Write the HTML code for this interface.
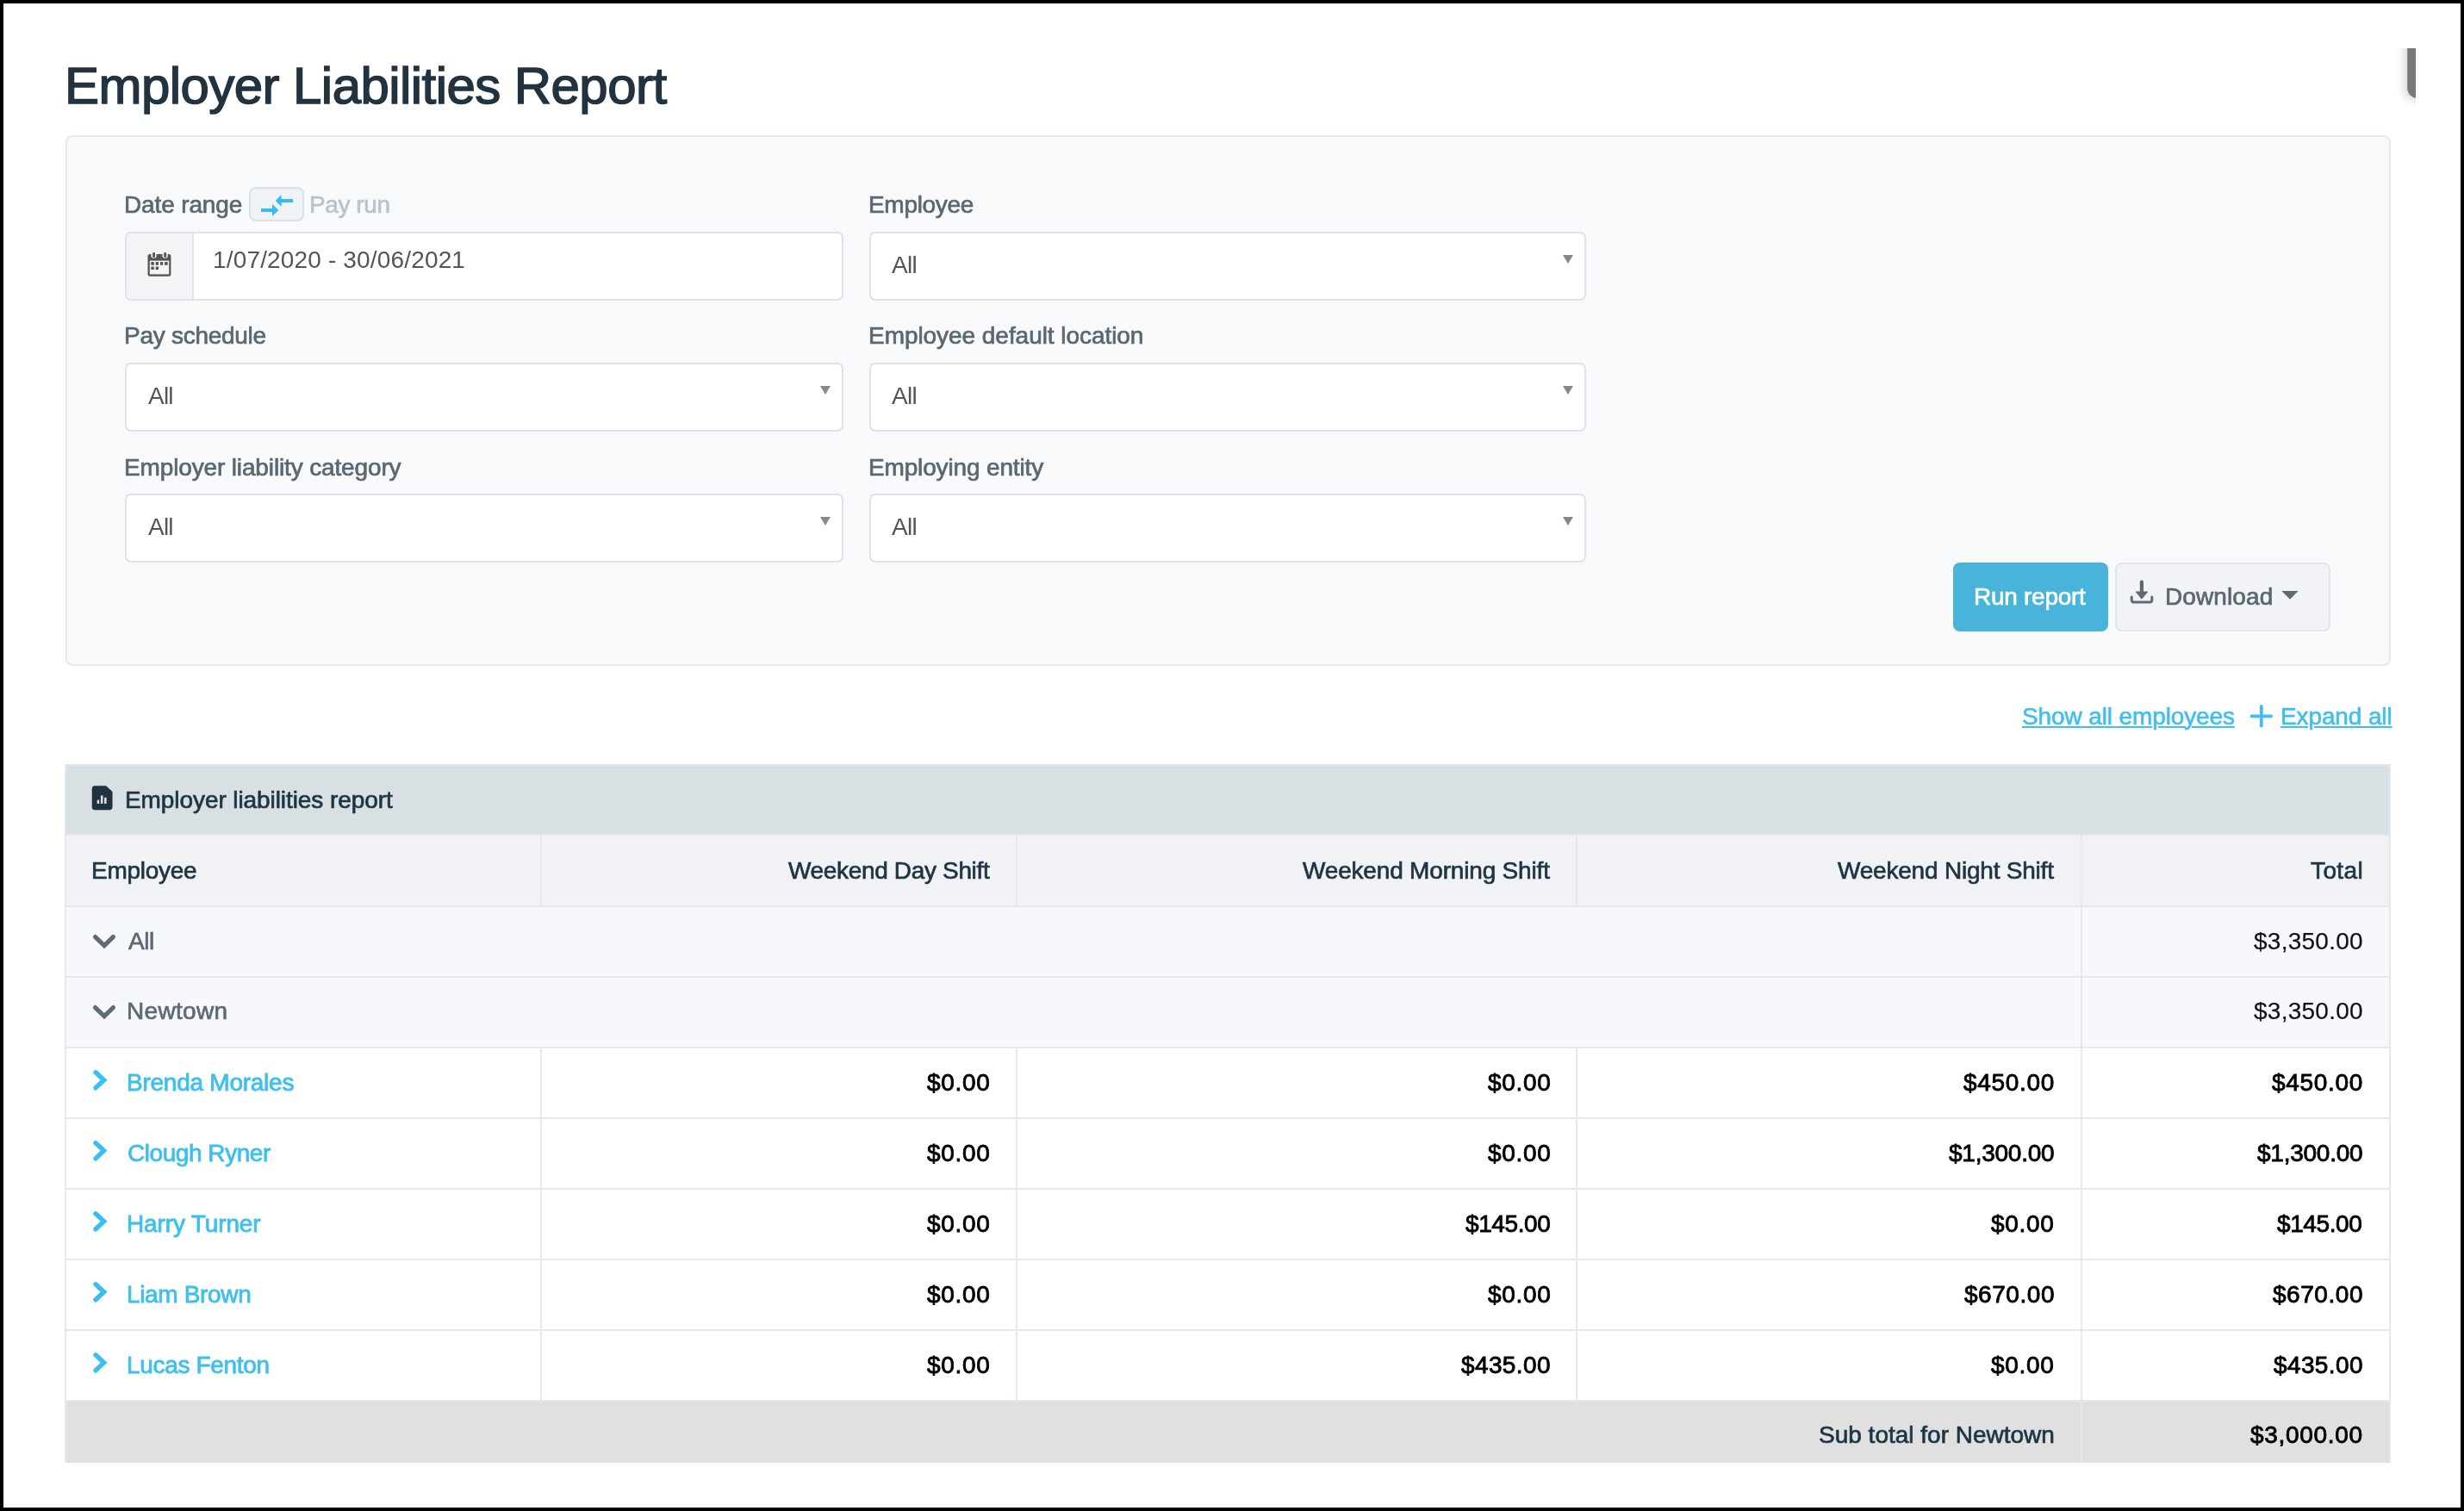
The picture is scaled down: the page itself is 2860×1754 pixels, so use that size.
<!DOCTYPE html>
<html><head><meta charset="utf-8"><title>Employer Liabilities Report</title>
<style>
html,body{margin:0;padding:0;}
body{width:2860px;height:1754px;overflow:hidden;background:#000;position:relative;font-family:"Liberation Sans",sans-serif;}
.page{position:absolute;left:4px;top:4px;width:2852px;height:1746px;background:#fff;overflow:hidden;}
.a{position:absolute;box-sizing:border-box;}
.t{position:absolute;white-space:nowrap;line-height:1;will-change:transform;font-family:"Liberation Sans",sans-serif;font-weight:400;}
.inp{position:absolute;box-sizing:border-box;background:#fff;border:2px solid #dde3e8;border-radius:7px;}
.sel .arr{position:absolute;width:0;height:0;border-left:6px solid transparent;border-right:6px solid transparent;border-top:10px solid #888;}
.hl{position:absolute;height:2px;background:#e4e9f0;}
.vl{position:absolute;width:2px;background:#e4e9f0;}
</style></head>
<body>
<div class="page"></div>
<div id="root" style="position:absolute;left:0;top:0;width:2860px;height:1754px;">
<!-- panel -->
<div class="a" style="left:4px;top:4px;width:2852px;height:1746px;background:#fff;"></div>
<div class="a" style="left:76px;top:157px;width:2699px;height:616px;background:#f8f9fb;border:2px solid #e5e9ef;border-radius:8px;"></div>
<!-- toggle -->
<div class="a" style="left:289px;top:217px;width:64px;height:40px;background:#f1f2f6;border:2px solid #d9e1ec;border-radius:8px;"></div>
<svg class="a" style="left:289px;top:217px" width="64" height="40" viewBox="289 217 64 40">
 <rect x="303" y="242" width="14" height="4" fill="#33bfee"/>
 <polygon points="316,236.8 323.3,243.9 316,251" fill="#33bfee"/>
 <rect x="326" y="231" width="14.2" height="4" fill="#33bfee"/>
 <polygon points="326.6,225.9 319.8,232.9 326.6,239.9" fill="#33bfee"/>
</svg>
<!-- date input -->
<div class="inp" style="left:145px;top:269px;width:834px;height:80px;overflow:hidden;">
  <div class="a" style="left:0;top:0;width:78px;height:76px;background:#f3f4f6;border-right:2px solid #dde3e8;"></div>
</div>
<svg class="a" style="left:165px;top:287px" width="40" height="40" viewBox="165 287 40 40">
 <rect x="171.5" y="295" width="26.9" height="25.7" rx="2.6" fill="#555"/>
 <rect x="173.8" y="302.6" width="22.4" height="15.8" fill="#f3f4f6"/>
 <circle cx="178.5" cy="296.6" r="3.2" fill="#f3f4f6"/>
 <circle cx="191.6" cy="296.6" r="3.2" fill="#f3f4f6"/>
 <rect x="177.1" y="292.9" width="2.9" height="6.2" rx="1.45" fill="#555"/>
 <rect x="190.2" y="292.9" width="2.9" height="6.2" rx="1.45" fill="#555"/>
 <g fill="#555">
  <rect x="175.3" y="304.1" width="3.5" height="3.7" rx="0.6"/>
  <rect x="180.7" y="304.1" width="3.3" height="3.7" rx="0.6"/>
  <rect x="185.9" y="304.1" width="3.4" height="3.7" rx="0.6"/>
  <rect x="191.1" y="304.1" width="3.6" height="3.7" rx="0.6"/>
  <rect x="175.3" y="309.4" width="3.5" height="3.7" rx="0.6"/>
  <rect x="180.7" y="309.4" width="3.3" height="3.7" rx="0.6"/>
 </g>
</svg>
<!-- selects -->
<div class="inp sel" style="left:1009px;top:269px;width:832px;height:80px;"><div class="arr" style="left:803px;top:25px"></div></div>
<div class="inp sel" style="left:145px;top:421px;width:834px;height:80px;"><div class="arr" style="left:805px;top:25px"></div></div>
<div class="inp sel" style="left:1009px;top:421px;width:832px;height:80px;"><div class="arr" style="left:803px;top:25px"></div></div>
<div class="inp sel" style="left:145px;top:573px;width:834px;height:80px;"><div class="arr" style="left:805px;top:25px"></div></div>
<div class="inp sel" style="left:1009px;top:573px;width:832px;height:80px;"><div class="arr" style="left:803px;top:25px"></div></div>
<!-- buttons -->
<div class="a" style="left:2267px;top:653px;width:180px;height:80px;background:#48b4d9;border-radius:8px;"></div>
<div class="a" style="left:2455px;top:653px;width:250px;height:80px;background:#f2f3f6;border:2px solid #e2e7ee;border-radius:8px;"></div>
<svg class="a" style="left:2465px;top:665px" width="210" height="45" viewBox="2465 665 210 45">
 <rect x="2483.8" y="673.5" width="4.2" height="15" rx="2" fill="#5e6a73"/>
 <polygon points="2479.3,687 2492.7,687 2485.9,695.2" fill="#5e6a73" stroke="#5e6a73" stroke-width="1" stroke-linejoin="round"/>
 <path d="M2474.2,693 v3.5 a2.6,2.6 0 0 0 2.6,2.6 h18.4 a2.6,2.6 0 0 0 2.6,-2.6 v-3.5" fill="none" stroke="#5e6a73" stroke-width="3" stroke-linecap="round"/>
 <polygon points="2648.3,685.9 2667.6,685.9 2658,695.8" fill="#5e6a73"/>
</svg>
<!-- links -->
<svg class="a" style="left:2608px;top:814px" width="34" height="34" viewBox="2608 814 34 34">
 <path d="M2624.8,820 v22.6 M2613.5,831.3 h22.6" stroke="#3dbfef" stroke-width="3.8" stroke-linecap="round"/>
</svg>
<!-- table -->
<div class="a" style="left:75px;top:887px;width:2700px;height:82px;background:#d9e0e4;"></div>
<div class="a" style="left:75px;top:969px;width:2700px;height:83px;background:#f0f2f6;"></div>
<div class="a" style="left:75px;top:1052px;width:2700px;height:164px;background:#f7f8fb;"></div>
<div class="a" style="left:75px;top:1216px;width:2700px;height:410px;background:#fff;"></div>
<div class="a" style="left:75px;top:1626px;width:2700px;height:72px;background:#e0e0e0;"></div>
<div class="vl" style="left:75px;top:887px;height:811px;"></div>
<div class="vl" style="left:2773px;top:887px;height:811px;"></div>
<div class="hl" style="left:75px;top:887px;width:2700px;background:#e1e7ec;"></div>
<div class="hl" style="left:75px;top:968px;width:2700px;background:#e3e8ee;"></div>
<div class="hl" style="left:75px;top:1051px;width:2700px;"></div>
<div class="hl" style="left:75px;top:1133px;width:2700px;"></div>
<div class="hl" style="left:75px;top:1215px;width:2700px;"></div>
<div class="hl" style="left:75px;top:1297px;width:2700px;"></div>
<div class="hl" style="left:75px;top:1379px;width:2700px;"></div>
<div class="hl" style="left:75px;top:1461px;width:2700px;"></div>
<div class="hl" style="left:75px;top:1543px;width:2700px;"></div>
<div class="hl" style="left:75px;top:1625px;width:2700px;"></div>
<div class="vl" style="left:627px;top:969px;height:83px;"></div>
<div class="vl" style="left:1179px;top:969px;height:83px;"></div>
<div class="vl" style="left:1829px;top:969px;height:83px;"></div>
<div class="vl" style="left:627px;top:1216px;height:410px;"></div>
<div class="vl" style="left:1179px;top:1216px;height:410px;"></div>
<div class="vl" style="left:1829px;top:1216px;height:410px;"></div>
<div class="vl" style="left:2415px;top:969px;height:729px;"></div>
<!-- doc icon -->
<svg class="a" style="left:100px;top:905px" width="40" height="40" viewBox="100 905 40 40">
 <path d="M110,912.4 h13 l7.2,6.6 v18 a3,3 0 0 1 -3,3 h-17.2 a3,3 0 0 1 -3,-3 v-21.6 a3,3 0 0 1 3,-3 z" fill="#1f3240" stroke="#1f3240" stroke-width="0.6" stroke-linejoin="round"/>
 <rect x="112.7" y="928.6" width="2.5" height="4.3" fill="#d9e0e4"/>
 <rect x="116.9" y="923.4" width="2.6" height="9.5" fill="#d9e0e4"/>
 <rect x="121" y="925.8" width="2.6" height="7.1" fill="#d9e0e4"/>
</svg>
<!-- chevrons -->
<svg class="a" style="left:100px;top:1070px" width="40" height="120" viewBox="100 1070 40 120">
 <path d="M110.6,1087.6 L121,1097.6 L131.4,1087.6" fill="none" stroke="#5f6b75" stroke-width="5.2" stroke-linecap="round" stroke-linejoin="miter"/>
 <path d="M110.6,1169.6 L121,1179.6 L131.4,1169.6" fill="none" stroke="#5f6b75" stroke-width="5.2" stroke-linecap="round" stroke-linejoin="miter"/>
</svg>
<svg class="a" style="left:100px;top:1230px" width="40" height="380" viewBox="100 1230 40 380">
 <g fill="none" stroke="#37c0ee" stroke-width="5.4" stroke-linecap="round" stroke-linejoin="miter">
 <path d="M111,1244.8 L120.6,1253.8 L111,1262.8"/>
 <path d="M111,1326.8 L120.6,1335.8 L111,1344.8"/>
 <path d="M111,1408.8 L120.6,1417.8 L111,1426.8"/>
 <path d="M111,1490.8 L120.6,1499.8 L111,1508.8"/>
 <path d="M111,1572.8 L120.6,1581.8 L111,1590.8"/>
 </g>
</svg>
<!-- top-right element -->
<div class="a" style="left:2770px;top:56px;width:34px;height:84px;overflow:hidden;">
  <div class="a" style="left:24px;top:-10px;width:30px;height:68px;background:#787878;border-left:1.5px solid #8c8c8c;border-bottom-left-radius:12px;box-shadow:-5px 3px 10px rgba(0,0,0,0.13);"></div>
</div>
<div class=t style="left:74.5px;top:69.5px;font-size:60px;letter-spacing:-0.56px;color:#22333f;-webkit-text-stroke:1.5px #22333f;">Employer Liabilities Report</div>
<div class=t style="left:144.3px;top:224.2px;font-size:28px;letter-spacing:-0.14px;color:#5b6770;-webkit-text-stroke:0.7px #5b6770;">Date range</div>
<div class=t style="left:358.8px;top:224.2px;font-size:28px;letter-spacing:-0.42px;color:#b8c3cd;-webkit-text-stroke:0.7px #b8c3cd;">Pay run</div>
<div class=t style="left:1008.0px;top:224.2px;font-size:28px;letter-spacing:-0.31px;color:#5b6770;-webkit-text-stroke:0.7px #5b6770;">Employee</div>
<div class=t style="left:144.3px;top:376.0px;font-size:28px;letter-spacing:-0.27px;color:#5b6770;-webkit-text-stroke:0.7px #5b6770;">Pay schedule</div>
<div class=t style="left:1007.7px;top:376.0px;font-size:28px;letter-spacing:-0.05px;color:#5b6770;-webkit-text-stroke:0.7px #5b6770;">Employee default location</div>
<div class=t style="left:144.3px;top:528.5px;font-size:28px;letter-spacing:-0.14px;color:#5b6770;-webkit-text-stroke:0.7px #5b6770;">Employer liability category</div>
<div class=t style="left:1007.7px;top:528.5px;font-size:28px;letter-spacing:-0.15px;color:#5b6770;-webkit-text-stroke:0.7px #5b6770;">Employing entity</div>
<div class=t style="left:247.3px;top:287.8px;font-size:28px;letter-spacing:0.16px;color:#555555;">1/07/2020 - 30/06/2021</div>
<div class=t style="left:1035.0px;top:293.8px;font-size:28px;letter-spacing:-0.70px;color:#555555;">All</div>
<div class=t style="left:171.9px;top:445.7px;font-size:28px;letter-spacing:-0.80px;color:#555555;">All</div>
<div class=t style="left:1035.0px;top:445.7px;font-size:28px;letter-spacing:-0.70px;color:#555555;">All</div>
<div class=t style="left:171.9px;top:597.8px;font-size:28px;letter-spacing:-0.80px;color:#555555;">All</div>
<div class=t style="left:1035.0px;top:597.8px;font-size:28px;letter-spacing:-0.70px;color:#555555;">All</div>
<div class=t style="left:2291.0px;top:678.8px;font-size:28px;letter-spacing:-0.27px;color:#ffffff;-webkit-text-stroke:0.7px #ffffff;">Run report</div>
<div class=t style="left:2512.7px;top:678.8px;font-size:28px;letter-spacing:0.11px;color:#5b6770;-webkit-text-stroke:0.7px #5b6770;">Download</div>
<div class=t style="left:2347.3px;top:818.0px;font-size:28px;letter-spacing:-0.12px;color:#3dbfef;-webkit-text-stroke:0.6px #3dbfef;text-decoration:underline;text-decoration-thickness:2px;text-underline-offset:2px;text-decoration-skip-ink:auto;">Show all employees</div>
<div class=t style="left:2646.8px;top:818.0px;font-size:28px;letter-spacing:-0.12px;color:#3dbfef;-webkit-text-stroke:0.6px #3dbfef;text-decoration:underline;text-decoration-thickness:2px;text-underline-offset:2px;text-decoration-skip-ink:auto;">Expand all</div>
<div class=t style="left:145.0px;top:914.9px;font-size:28px;letter-spacing:-0.08px;color:#1f3442;-webkit-text-stroke:0.7px #1f3442;">Employer liabilities report</div>
<div class=t style="left:106.2px;top:996.6px;font-size:28px;letter-spacing:-0.26px;color:#1f3442;-webkit-text-stroke:0.7px #1f3442;">Employee</div>
<div class=t style="left:914.5px;top:996.6px;font-size:28px;letter-spacing:-0.34px;color:#1f3442;-webkit-text-stroke:0.7px #1f3442;">Weekend Day Shift</div>
<div class=t style="left:1512.2px;top:996.6px;font-size:28px;letter-spacing:-0.18px;color:#1f3442;-webkit-text-stroke:0.7px #1f3442;">Weekend Morning Shift</div>
<div class=t style="left:2132.7px;top:996.6px;font-size:28px;letter-spacing:-0.21px;color:#1f3442;-webkit-text-stroke:0.7px #1f3442;">Weekend Night Shift</div>
<div class=t style="left:2682.4px;top:996.6px;font-size:28px;letter-spacing:0.40px;color:#1f3442;-webkit-text-stroke:0.7px #1f3442;">Total</div>
<div class=t style="left:148.8px;top:1078.6px;font-size:28px;letter-spacing:-0.45px;color:#5e6a73;-webkit-text-stroke:0.7px #5e6a73;">All</div>
<div class=t style="left:2615.6px;top:1078.6px;font-size:28px;letter-spacing:0.25px;color:#111111;-webkit-text-stroke:0.2px #111111;">$3,350.00</div>
<div class=t style="left:147.3px;top:1160.2px;font-size:28px;letter-spacing:0.33px;color:#5e6a73;-webkit-text-stroke:0.7px #5e6a73;">Newtown</div>
<div class=t style="left:2615.6px;top:1160.2px;font-size:28px;letter-spacing:0.25px;color:#111111;-webkit-text-stroke:0.2px #111111;">$3,350.00</div>
<div class=t style="left:147.3px;top:1242.6px;font-size:28px;letter-spacing:-0.25px;color:#3dbfef;-webkit-text-stroke:0.8px #3dbfef;">Brenda Morales</div>
<div class=t style="left:1075.8px;top:1242.6px;font-size:28px;letter-spacing:0.70px;color:#000000;-webkit-text-stroke:0.85px #000000;">$0.00</div>
<div class=t style="left:1726.5px;top:1242.6px;font-size:28px;letter-spacing:0.70px;color:#000000;-webkit-text-stroke:0.85px #000000;">$0.00</div>
<div class=t style="left:2278.8px;top:1242.6px;font-size:28px;letter-spacing:0.67px;color:#000000;-webkit-text-stroke:0.85px #000000;">$450.00</div>
<div class=t style="left:2637.0px;top:1242.6px;font-size:28px;letter-spacing:0.67px;color:#000000;-webkit-text-stroke:0.85px #000000;">$450.00</div>
<div class=t style="left:148.3px;top:1324.6px;font-size:28px;letter-spacing:-0.45px;color:#3dbfef;-webkit-text-stroke:0.8px #3dbfef;">Clough Ryner</div>
<div class=t style="left:1075.8px;top:1324.6px;font-size:28px;letter-spacing:0.70px;color:#000000;-webkit-text-stroke:0.85px #000000;">$0.00</div>
<div class=t style="left:1726.5px;top:1324.6px;font-size:28px;letter-spacing:0.70px;color:#000000;-webkit-text-stroke:0.85px #000000;">$0.00</div>
<div class=t style="left:2261.8px;top:1324.6px;font-size:28px;letter-spacing:-0.25px;color:#000000;-webkit-text-stroke:0.85px #000000;">$1,300.00</div>
<div class=t style="left:2620.0px;top:1324.6px;font-size:28px;letter-spacing:-0.25px;color:#000000;-webkit-text-stroke:0.85px #000000;">$1,300.00</div>
<div class=t style="left:147.3px;top:1406.6px;font-size:28px;letter-spacing:-0.14px;color:#3dbfef;-webkit-text-stroke:0.8px #3dbfef;">Harry Turner</div>
<div class=t style="left:1075.8px;top:1406.6px;font-size:28px;letter-spacing:0.70px;color:#000000;-webkit-text-stroke:0.85px #000000;">$0.00</div>
<div class=t style="left:1700.7px;top:1406.6px;font-size:28px;letter-spacing:-0.40px;color:#000000;-webkit-text-stroke:0.85px #000000;">$145.00</div>
<div class=t style="left:2311.0px;top:1406.6px;font-size:28px;letter-spacing:0.70px;color:#000000;-webkit-text-stroke:0.85px #000000;">$0.00</div>
<div class=t style="left:2643.4px;top:1406.6px;font-size:28px;letter-spacing:-0.40px;color:#000000;-webkit-text-stroke:0.85px #000000;">$145.00</div>
<div class=t style="left:147.3px;top:1488.6px;font-size:28px;letter-spacing:-0.34px;color:#3dbfef;-webkit-text-stroke:0.8px #3dbfef;">Liam Brown</div>
<div class=t style="left:1075.8px;top:1488.6px;font-size:28px;letter-spacing:0.70px;color:#000000;-webkit-text-stroke:0.85px #000000;">$0.00</div>
<div class=t style="left:1726.5px;top:1488.6px;font-size:28px;letter-spacing:0.70px;color:#000000;-webkit-text-stroke:0.85px #000000;">$0.00</div>
<div class=t style="left:2279.5px;top:1488.6px;font-size:28px;letter-spacing:0.55px;color:#000000;-webkit-text-stroke:0.85px #000000;">$670.00</div>
<div class=t style="left:2637.7px;top:1488.6px;font-size:28px;letter-spacing:0.55px;color:#000000;-webkit-text-stroke:0.85px #000000;">$670.00</div>
<div class=t style="left:147.3px;top:1570.6px;font-size:28px;letter-spacing:-0.33px;color:#3dbfef;-webkit-text-stroke:0.8px #3dbfef;">Lucas Fenton</div>
<div class=t style="left:1075.8px;top:1570.6px;font-size:28px;letter-spacing:0.70px;color:#000000;-webkit-text-stroke:0.85px #000000;">$0.00</div>
<div class=t style="left:1696.0px;top:1570.6px;font-size:28px;letter-spacing:0.38px;color:#000000;-webkit-text-stroke:0.85px #000000;">$435.00</div>
<div class=t style="left:2311.0px;top:1570.6px;font-size:28px;letter-spacing:0.70px;color:#000000;-webkit-text-stroke:0.85px #000000;">$0.00</div>
<div class=t style="left:2638.7px;top:1570.6px;font-size:28px;letter-spacing:0.38px;color:#000000;-webkit-text-stroke:0.85px #000000;">$435.00</div>
<div class=t style="left:2111.0px;top:1652.3px;font-size:28px;letter-spacing:0.00px;color:#1f3442;-webkit-text-stroke:0.7px #1f3442;">Sub total for Newtown</div>
<div class=t style="left:2612.4px;top:1652.3px;font-size:28px;letter-spacing:0.70px;color:#000000;-webkit-text-stroke:0.85px #000000;">$3,000.00</div>
</div>
<div class="a" style="left:0;top:0;width:2860px;height:4px;background:#000"></div>
<div class="a" style="left:0;top:1750px;width:2860px;height:4px;background:#000"></div>
<div class="a" style="left:0;top:0;width:4px;height:1754px;background:#000"></div>
<div class="a" style="left:2856px;top:0;width:4px;height:1754px;background:#000"></div>
</body></html>
